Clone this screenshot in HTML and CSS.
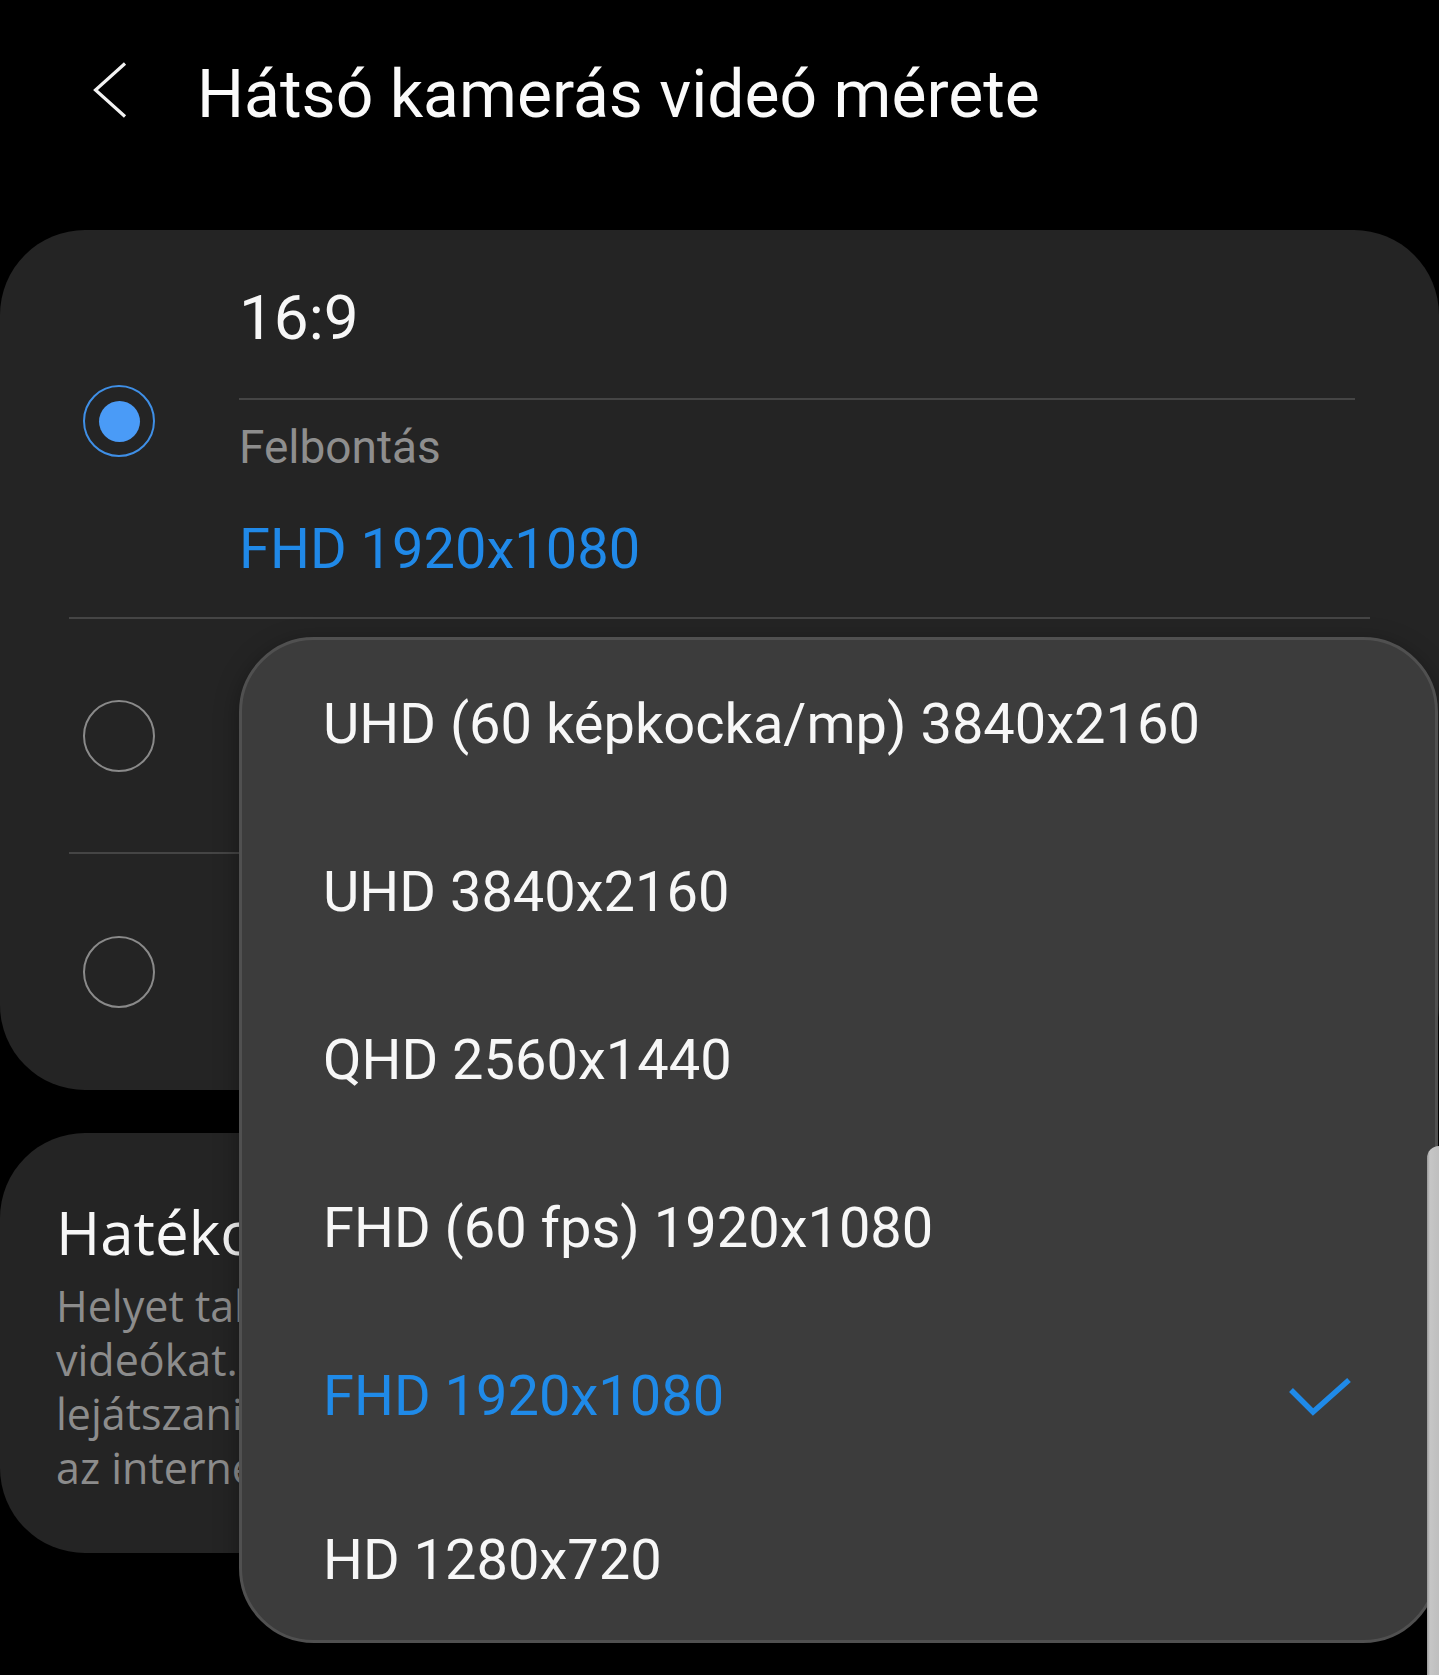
FILE: index.html
```html
<!DOCTYPE html>
<html lang="hu">
<head>
<meta charset="utf-8">
<title>Hátsó kamerás videó mérete</title>
<link rel="stylesheet" href="styles.css">
</head>
<body>
<div class="screen">
  <header class="appbar">
    <svg class="back" viewBox="0 0 34 56" width="34" height="56" aria-hidden="true">
      <polyline points="32,1.5 2.5,28 32,54.5" fill="none" stroke="#f2f2f2" stroke-width="3.2" stroke-linejoin="miter"/>
    </svg>
    <h1 class="title">Hátsó kamerás videó mérete</h1>
  </header>

  <section class="card">
    <div class="opt opt-main">
      <span class="radio radio-on"><span class="dot"></span></span>
      <div class="opt-text">
        <div class="opt-title opt-title-main">16:9</div>
        <div class="opt-label">Felbontás</div>
        <div class="opt-value">FHD 1920x1080</div>
      </div>
    </div>
    <div class="divider"></div>
    <div class="opt opt-small">
      <span class="radio"></span>
      <div class="opt-text">
        <div class="opt-title">21:9</div>
        <div class="opt-sub">FHD 2400x1080</div>
      </div>
    </div>
    <div class="divider"></div>
    <div class="opt opt-small opt-last">
      <span class="radio"></span>
      <div class="opt-text">
        <div class="opt-title">1:1</div>
        <div class="opt-sub">1440x1440</div>
      </div>
    </div>
  </section>

  <section class="card card-info">
    <h2 class="info-title">Hatékony videó</h2>
    <p class="info-text">
      <span class="line">Helyet takaríthat meg a HEVC formátumú</span>
      <span class="line">videókat. Előfordulhat, hogy nem tudja</span>
      <span class="line">lejátszani ezeket más eszközökön vagy</span>
      <span class="line">az interneten.</span>
    </p>
  </section>

  <div class="menu" role="listbox">
    <div class="menu-item">UHD (60 képkocka/mp) 3840x2160</div>
    <div class="menu-item">UHD 3840x2160</div>
    <div class="menu-item">QHD 2560x1440</div>
    <div class="menu-item">FHD (60 fps) 1920x1080</div>
    <div class="menu-item menu-item-on">
      <span>FHD 1920x1080</span>
      <svg class="check" viewBox="0 0 62 40" width="62" height="40" aria-hidden="true">
        <polyline points="2,13 24,35 60,3" fill="none" stroke="#1f8ae8" stroke-width="5.5"/>
      </svg>
    </div>
    <div class="menu-item menu-item-last">HD 1280x720</div>
  </div>

  <div class="scroll-thumb"></div>
</div>
</body>
</html>
```

FILE: styles.css
```css
html, body {
  margin: 0;
  padding: 0;
  background: #000;
}

.screen {
  position: relative;
  width: 1439px;
  height: 1675px;
  overflow: hidden;
  background: #000;
  font-family: Roboto, "Liberation Sans", sans-serif;
  color: #f7f7f7;
}

/* App bar */
.appbar {
  display: flex;
  align-items: flex-start;
  height: 230px;
  padding-left: 93px;
  box-sizing: border-box;
}

.back {
  flex: none;
  margin-top: 62px;
}

.title {
  margin: 50px 0 0 70px;
  font-size: 66px;
  line-height: 90px;
  font-weight: 400;
  color: #fafafa;
  white-space: nowrap;
}

/* Cards */
.card {
  background: #242424;
  border-radius: 85px;
}

.opt {
  display: flex;
  align-items: center;
  padding: 0 84px 0 83px;
  box-sizing: border-box;
}

.opt-main {
  height: 387px;
}

.opt-main .opt-text {
  align-self: stretch;
  padding-top: 48px;
}

.opt-small {
  height: 233px;
}

.opt-last {
  height: 236px;
}

.radio {
  flex: none;
  width: 72px;
  height: 72px;
  box-sizing: border-box;
  border-radius: 50%;
  border: 2.5px solid #8a8a8a;
  display: flex;
  align-items: center;
  justify-content: center;
}

.radio-on {
  border-color: #3f8fe6;
  margin-top: -5px;
}

.dot {
  width: 41px;
  height: 41px;
  border-radius: 50%;
  background: #4a9bf7;
}

.opt-text {
  flex: 1;
  margin-left: 84px;
}

.opt-title {
  font-size: 62px;
  line-height: 80px;
  color: #f7f7f7;
}

.opt-title-main {
  padding-bottom: 40px;
  border-bottom: 2px solid #454545;
}

.opt-label {
  margin-top: 17px;
  font-size: 46px;
  line-height: 60px;
  color: #8e8e8e;
}

.opt-value {
  margin-top: 37px;
  font-size: 56px;
  line-height: 70px;
  color: #2089e8;
}

.opt-sub {
  font-size: 46px;
  line-height: 60px;
  color: #2089e8;
}

.divider {
  height: 2px;
  margin: 0 69px;
  background: #454545;
}

.card-info {
  margin-top: 43px;
  padding: 64px 58px 58px 56px;
  font-family: "Open Sans", "Noto Sans", sans-serif;
}

.info-title {
  margin: 0;
  font-size: 60px;
  line-height: 70px;
  font-weight: 400;
  color: #f7f7f7;
  white-space: nowrap;
}

.info-text {
  margin: 12px 0 0;
  font-size: 43px;
  line-height: 54px;
  color: #8c8c8c;
}

.line {
  display: block;
  white-space: nowrap;
}

/* Dropdown menu (overlay) */
.menu {
  position: absolute;
  left: 239px;
  top: 637px;
  width: 1199px;
  box-sizing: border-box;
  background: #3c3c3c;
  border: 3px solid #505050;
  border-radius: 75px;
  box-shadow: 0 6px 24px rgba(0, 0, 0, 0.35);
}

.menu-item {
  display: flex;
  align-items: center;
  justify-content: space-between;
  height: 168px;
  padding: 0 84px 0 81px;
  font-size: 56px;
  color: #f7f7f7;
  white-space: nowrap;
}

.menu-item-last {
  height: 160px;
}

.menu-item-on {
  color: #1f8ae8;
}

.check {
  flex: none;
  margin-top: 2px;
}

.scroll-thumb {
  position: absolute;
  left: 1427px;
  top: 1146px;
  width: 14px;
  height: 540px;
  border-radius: 12px 0 0 0;
  background: linear-gradient(to right, #9a9a9a 0, #c6c6c6 3px, #bdbdbd 100%);
}
```
